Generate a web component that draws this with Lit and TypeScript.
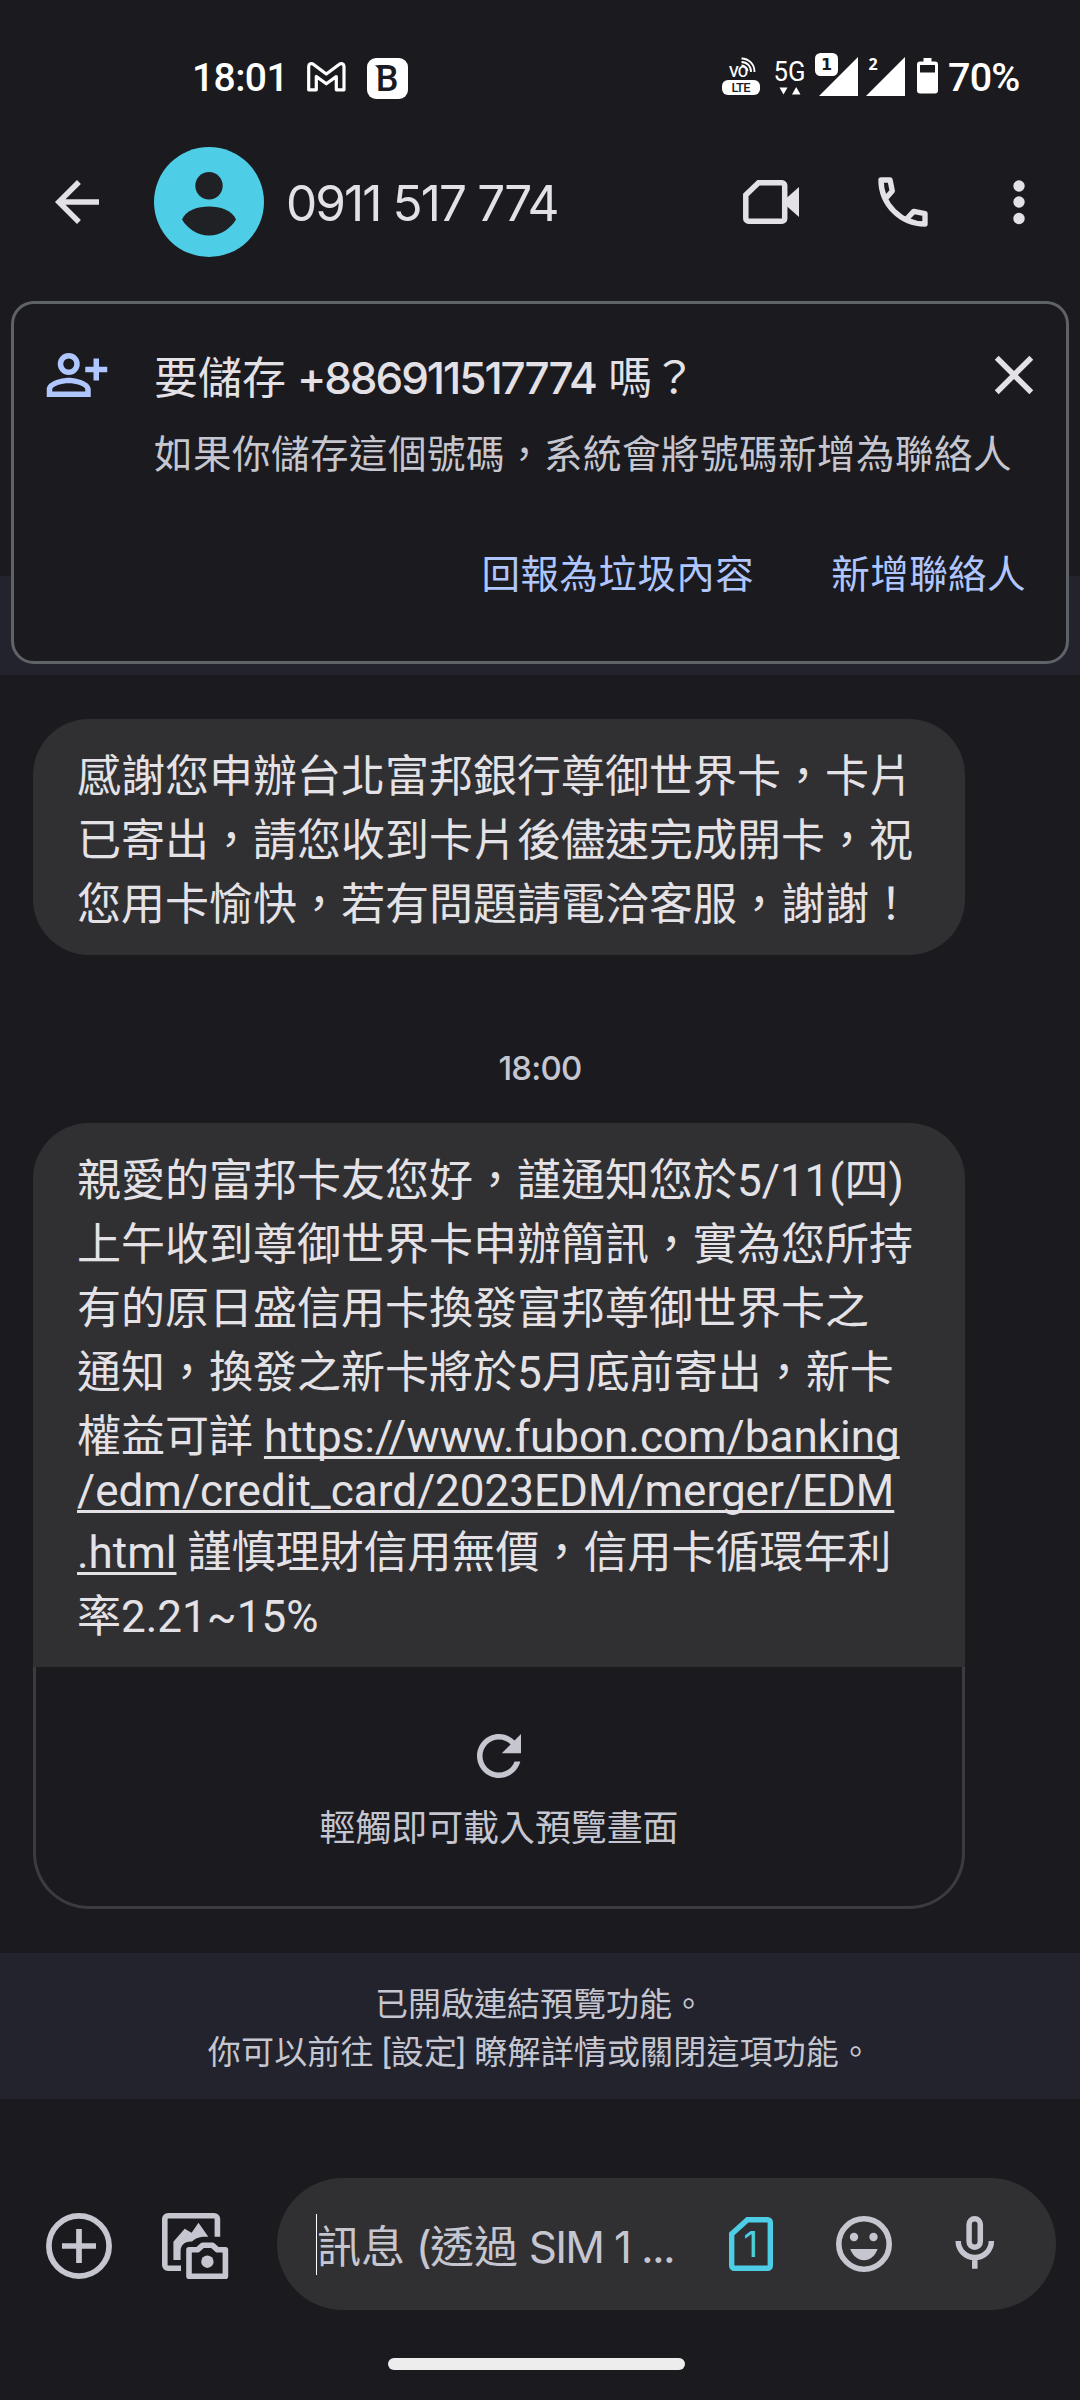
import { LitElement, html, css } from "lit";
import { customElement } from "lit/decorators.js";

const PHONE = "0911 517 774";

@customElement("status-bar")
class StatusBar extends LitElement {
  static styles = css`
    :host { display: flex; align-items: center; height: 84px; padding: 36px 57px 0 192px; color: #fff; font-family: Roboto, sans-serif; font-weight: 500; }
    svg { display: block; flex: none; overflow: visible; }
    .time { width: 115px; font-size: 39px; line-height: 46px; letter-spacing: -0.6px; }
    .mail { margin: -2px 21px 0 0; }
    .grow { flex: 1; }
    .volte { margin: -4px 15px 0 0; }
    .net { margin: -3px 10px 0 0; }
    .sig { margin: -7px 8px 0 0; }
    .sig2 { margin: -7px 12px 0 0; }
    .battery { margin: -4px 10px 0 0; }
    .pct { width: 75px; font-size: 39.500px; line-height: 46px; letter-spacing: -0.8px; white-space: nowrap; }
    .vo { font: 500 15px Roboto, sans-serif; fill: #fff; }
    .lte { font: 500 13px Roboto, sans-serif; fill: #1b1b1f; }
    .g5 { font: 400 27px Roboto, sans-serif; fill: #fff; }
    .badge { font: 700 16px "DejaVu Sans", sans-serif; fill: #1b1b1f; }
    .two { font: 700 16px "Noto Sans", sans-serif; fill: #fff; }
    .b { font: 500 36px Roboto, sans-serif; fill: #1b1b1f; }
  `;
  render() {
    return html`
      <span class="time">18:01</span>
      <svg class="mail" width="39" height="30" viewBox="0 0 39 30" fill="none" stroke="#fff" stroke-width="3.200" stroke-linejoin="round">
        <path d="M1.7 4.5c0-2.8 2.8-3.6 4.6-2.2L19.3 12 32.4 2.3c1.8-1.4 4.6-.6 4.6 2.2v23.3h-7.7V14.5l-10 7.3-10-7.3v13.3H1.7z"/>
      </svg>
      <svg width="41" height="41" viewBox="0 0 41 41">
        <rect width="41" height="41" rx="9" fill="#fff"/>
        <text class="b" x="8.800" y="33">B</text>
        <path d="M8 7.300h7v4h-3z" fill="#1b1b1f"/>
      </svg>
      <span class="grow"></span>
      <svg class="volte" width="38" height="40" viewBox="0 0 38 40">
        <text class="vo" x="7" y="21" textLength="19">VO</text>
        <g fill="none" stroke="#fff" stroke-width="1.800">
          <path d="M19.500 2.500A13 13 0 0 1 32.500 16"/><path d="M19.500 6A9.500 9.500 0 0 1 29 16"/><path d="M19.500 9.500A6 6 0 0 1 25.500 15"/>
        </g>
        <rect y="24" width="38" height="15" rx="6" fill="#fff"/>
        <text class="lte" x="9.500" y="36" textLength="19">LTE</text>
      </svg>
      <svg class="net" width="30" height="40" viewBox="0 0 30 40">
        <text class="g5" x="-1.500" y="24.300" textLength="32" lengthAdjust="spacingAndGlyphs">5G</text>
        <path d="M4.500 30.500h8l-4 7zM17 37.500h8.500l-4.300-7.500z" fill="#fff"/>
      </svg>
      <svg class="sig" width="43" height="43" viewBox="0 0 43 43">
        <path d="M43 4v39H4z" fill="#fff"/>
        <rect width="23" height="23" rx="5.500" fill="#fff"/>
        <text class="badge" x="6" y="17.200">1</text>
      </svg>
      <svg class="sig2" width="39" height="43" viewBox="0 0 39 43">
        <path d="M39 4v39H0z" fill="#fff"/>
        <text class="two" x="2.500" y="17">2</text>
      </svg>
      <svg class="battery" width="21" height="36" viewBox="0 0 21 36">
        <path fill="#fff" fill-rule="evenodd" d="M6.500 0h8v3.500H18a3 3 0 0 1 3 3V32.500a3 3 0 0 1-3 3H3a3 3 0 0 1-3-3V6.500a3 3 0 0 1 3-3h3.500zM3 7v7.500h15V7z"/>
      </svg>
      <span class="pct">70%</span>
    `;
  }
}

@customElement("chat-header")
class ChatHeader extends LitElement {
  static styles = css`
    :host { display: flex; align-items: center; box-sizing: border-box; height: 164px; padding: 0 28px 0 44px; color: #e4e1e6; }
    svg { display: block; flex: none; }
    .avatar { margin: 0 22px 0 44px; }
    .name { flex: 1; font: 400 49.500px/60px Inter, sans-serif; letter-spacing: -1.900px; white-space: nowrap; padding-top: 1px; }
    .video { margin-right: 71px; }
    .call { margin-right: 50px; }
  `;
  render() {
    return html`
      <svg width="66" height="66" viewBox="0 0 24 24" fill="currentColor"><path d="M20 11H7.830l5.590-5.590L12 4l-8 8 8 8 1.410-1.410L7.830 13H20z"/></svg>
      <svg class="avatar" width="110" height="110" viewBox="0 0 110 110">
        <circle cx="55" cy="55" r="55" fill="#4ecde6"/>
        <circle cx="55" cy="38.700" r="13.700" fill="#202124"/>
        <path d="M28 72.500C32 63 44 59.500 55 59.500S78 63 82 72.500C77 81 67 88.500 55 88.500S33 81 28 72.500z" fill="#202124"/>
      </svg>
      <span class="name">${PHONE}</span>
      <svg class="video" width="56" height="44" viewBox="0 0 56 44">
        <path d="M15.500 2.800H39a2.700 2.700 0 0 1 2.700 2.700V38.500A2.700 2.700 0 0 1 39 41.200H5.500a2.700 2.700 0 0 1-2.700-2.700V15z" fill="none" stroke="currentColor" stroke-width="5.500"/>
        <path d="M43 18.500L56 7v30L43 25.500z" fill="currentColor"/>
      </svg>
      <svg class="call" width="66" height="66" viewBox="0 0 24 24" fill="none" stroke="currentColor" stroke-width="1.950" stroke-linejoin="round">
        <path d="M5.700 10.700L8.100 8 7.300 4H4A16 16 0 0 0 20 20V16.200L15.900 15.400 13.300 18.200"/>
      </svg>
      <svg width="66" height="66" viewBox="0 0 66 66" fill="currentColor"><circle cx="33" cy="17" r="5.700"/><circle cx="33" cy="33" r="5.700"/><circle cx="33" cy="49.500" r="5.700"/></svg>
    `;
  }
}

@customElement("save-contact-card")
class SaveContactCard extends LitElement {
  static styles = css`
    :host { display: block; box-sizing: border-box; height: 391px; padding: 17px 11px 0; background: linear-gradient(#1b1b1f 292px, #22232d 292px); }
    .card { box-sizing: border-box; height: 363px; border: 3px solid #5f6368; border-radius: 23px; background: #1b1b1f; padding: 38px 19px 0 30px; display: flex; flex-direction: column; }
    .top { display: flex; align-items: flex-start; }
    svg { display: block; flex: none; }
    .add { color: #b0c6ff; margin-right: 44px; }
    .text { flex: 1; white-space: nowrap; padding-top: 3px; }
    .title { color: #e4e1e6; font: 400 44px/66px Inter, "Noto Sans CJK TC", sans-serif; }
    .num { font-weight: 500; letter-spacing: -2.050px; margin-left: -1.500px; }
    .sub { color: #c5c6d0; font: 400 38.500px/60px Roboto, "Noto Sans CJK TC", sans-serif; letter-spacing: 0.500px; margin-top: 14px; width: 800px; }
    .close { color: #e4e1e6; }
    .actions { display: flex; justify-content: flex-end; gap: 77px; margin-top: 60px; padding-right: 21px; color: #b0c6ff; font: 400 38.500px/60px Roboto, "Noto Sans CJK TC", sans-serif; letter-spacing: 0.450px; }
  `;
  render() {
    return html`
      <div class="card">
        <div class="top">
          <svg class="add" width="66" height="66" viewBox="0 0 24 24" fill="currentColor">
            <circle cx="9" cy="8" r="3" fill="none" stroke="currentColor" stroke-width="2"/>
            <path fill-rule="evenodd" d="M1 20v-2.800C1 14.500 6 13 9 13s8 1.500 8 4.200V20zM3 18h12v-.8C15 16 11.500 15 9 15s-6 1-6 2.200z"/>
            <path d="M18 6h2v3h3v2h-3v3h-2v-3h-3V9h3z"/>
          </svg>
          <div class="text">
            <div class="title">要儲存 <span class="num">+886911517774</span> 嗎？</div>
            <div class="sub">如果你儲存這個號碼，系統會將號碼新增為聯絡人</div>
          </div>
          <svg class="close" width="66" height="66" viewBox="0 0 24 24" fill="currentColor"><path d="M19 6.410L17.590 5 12 10.590 6.410 5 5 6.410 10.590 12 5 17.590 6.410 19 12 13.410 17.590 19 19 17.590 13.410 12z"/></svg>
        </div>
        <div class="actions"><span>回報為垃圾內容</span><span>新增聯絡人</span></div>
      </div>
    `;
  }
}

@customElement("message-list")
class MessageList extends LitElement {
  static styles = css`
    :host { display: flex; flex-direction: column; height: 1278px; box-sizing: border-box; padding: 44px 115px 0 33px; }
    .bubble { box-sizing: border-box; background: #303032; color: #e4e2e6; border-radius: 56px; padding: 26px 40px 18px 44px; font: 400 44px/64px Roboto, "Noto Sans CJK TC", sans-serif; white-space: nowrap; }
    .joined { border-radius: 56px 56px 0 0; }
    .latin { line-height: 44px; padding-bottom: 8px; }
    .link { text-decoration: underline; text-decoration-thickness: 2.500px; text-underline-offset: 4px; text-decoration-skip-ink: none; }
    .time { margin: 92px -82px 33px 0; text-align: center; color: #c5c6d0; font: 500 33px/43px Inter, sans-serif; letter-spacing: -0.800px; }
    .preview { box-sizing: border-box; height: 242px; border: 3px solid #3b3b40; border-top: 0; border-radius: 0 0 56px 56px; display: flex; flex-direction: column; align-items: center; padding-top: 56px; color: #c5c6d0; font: 400 35.900px/50px Roboto, "Noto Sans CJK TC", sans-serif; }
    .label { margin-top: 15px; }
    svg { display: block; }
  `;
  render() {
    return html`
      <div class="bubble">
        <div>感謝您申辦台北富邦銀行尊御世界卡，卡片</div>
        <div>已寄出，請您收到卡片後儘速完成開卡，祝</div>
        <div>您用卡愉快，若有問題請電洽客服，謝謝！</div>
      </div>
      <div class="time">18:00</div>
      <div class="bubble joined">
        <div>親愛的富邦卡友您好，謹通知您於5/11(四)</div>
        <div>上午收到尊御世界卡申辦簡訊，實為您所持</div>
        <div>有的原日盛信用卡換發富邦尊御世界卡之</div>
        <div>通知，換發之新卡將於5月底前寄出，新卡</div>
        <div>權益可詳 <span class="link">https://www.fubon.com/banking</span></div>
        <div class="latin"><span class="link">/edm/credit_card/2023EDM/merger/EDM</span></div>
        <div><span class="link">.html</span> 謹慎理財信用無價，信用卡循環年利</div>
        <div>率2.21~15%</div>
      </div>
      <div class="preview">
        <svg width="66" height="66" viewBox="0 0 24 24" fill="currentColor"><path d="M17.650 6.350C16.200 4.900 14.210 4 12 4c-4.420 0-7.990 3.580-7.990 8s3.570 8 7.990 8c3.730 0 6.840-2.550 7.730-6h-2.080c-.82 2.330-3.040 4-5.650 4-3.310 0-6-2.690-6-6s2.690-6 6-6c1.660 0 3.140.69 4.220 1.780L13 11h7V4z"/></svg>
        <div class="label">輕觸即可載入預覽畫面</div>
      </div>
    `;
  }
}

@customElement("compose-bar")
class ComposeBar extends LitElement {
  static styles = css`
    :host { display: flex; align-items: center; height: 132px; padding: 0 24px 0 46px; color: #c5c6d0; }
    svg { display: block; flex: none; overflow: visible; }
    .plus { margin: 4px 50px 0 0; }
    .gallery { margin: 4px 49px 0 0; }
    .pill { flex: 1; height: 132px; border-radius: 66px; background: #303032; display: flex; align-items: center; box-sizing: border-box; padding: 0 61px 0 39px; }
    .cursor { width: 1px; height: 61px; background: #fff; }
    .hint { width: 412px; padding-top: 5px; font: 400 44px/64px Inter, "Noto Sans CJK TC", sans-serif; white-space: nowrap; }
    .latin { letter-spacing: -1.700px; }
    .sim { margin-right: 63px; }
    .one { font: 400 36px Inter, sans-serif; fill: #4ecde6; }
    .smile { margin-right: 63px; }
  `;
  render() {
    return html`
      <svg class="plus" width="66" height="66" viewBox="0 0 66 66" fill="none" stroke="currentColor" stroke-width="5.700"><circle cx="33" cy="33" r="30.100"/><path d="M33 16v34M16 33h34"/></svg>
      <svg class="gallery" width="66" height="66" viewBox="0 0 66 66" fill="none" stroke="currentColor" stroke-width="5.600">
        <path d="M55.400 23.700V6a3.200 3.200 0 0 0-3.200-3.200H6A3.200 3.200 0 0 0 2.800 6V52A3.200 3.200 0 0 0 6 55.200H19"/>
        <path stroke="none" fill="currentColor" d="M11.400 47V28.700L22.700 15.700 29.600 19.700 36.500 9.700 46.300 23.700C40 23.700 35.500 23.500 30 28.500 23 28 18.600 32 18.600 38V47z"/>
        <path stroke-linejoin="round" d="M27 36.800H35.500L40.500 32.300H50.500L55.500 36.800H63.400V63.200H27z"/>
        <circle cx="45.400" cy="48.700" r="6.200" fill="currentColor" stroke="none"/>
      </svg>
      <div class="pill">
        <span class="cursor"></span>
        <span class="hint">訊息<span class="latin"> (</span>透過<span class="latin"> SIM 1 ...</span></span>
        <svg class="sim" width="44" height="54" viewBox="0 0 44 54">
          <path d="M18.500 2.700H38.700A2.600 2.600 0 0 1 41.300 5.300V48.700A2.600 2.600 0 0 1 38.700 51.300H5.300A2.600 2.600 0 0 1 2.700 48.700V17z" fill="none" stroke="#4ecde6" stroke-width="5.400"/>
          <text class="one" x="14.500" y="40">1</text>
        </svg>
        <svg class="smile" width="56" height="56" viewBox="0 0 56 56">
          <circle cx="28" cy="28" r="25.200" fill="none" stroke="currentColor" stroke-width="5.600"/>
          <g fill="currentColor"><circle cx="18" cy="21" r="4.200"/><circle cx="37.500" cy="21" r="4.200"/><path d="M14.200 33H41.600C39 40 34 44.300 28 44.300S16.800 40 14.200 33z"/></g>
        </svg>
        <svg class="mic" width="39" height="53" viewBox="0 0 39 53" fill="none" stroke="currentColor" stroke-width="5.500">
          <g transform="translate(0.500 -2)"><rect x="13.600" y="2.700" width="11.200" height="28.500" rx="5.600"/><path d="M2.700 25a16.600 16.600 0 0 0 33.200 0M19.300 41V52.700"/></g>
        </svg>
      </div>
    `;
  }
}

@customElement("app-root")
class AppRoot extends LitElement {
  static styles = css`
    :host { display: flex; flex-direction: column; width: 1080px; height: 2400px; overflow: hidden; background: #1b1b1f; }
    .notice { height: 146px; box-sizing: border-box; padding-top: 28px; background: #22232d; color: #c5c6d0; text-align: center; font: 400 33px/48px Roboto, "Noto Sans CJK TC", sans-serif; }
    .wide { letter-spacing: 0.150px; }
    .compose { padding-top: 79px; }
    .nav { width: 297px; height: 12px; border-radius: 6px; background: #ededed; margin: 48px 0 0 388px; }
  `;
  render() {
    return html`
      <status-bar></status-bar>
      <chat-header></chat-header>
      <save-contact-card></save-contact-card>
      <message-list></message-list>
      <div class="notice">
        <div>已開啟連結預覽功能。</div>
        <div class="wide">你可以前往 [設定] 瞭解詳情或關閉這項功能。</div>
      </div>
      <div class="compose"><compose-bar></compose-bar></div>
      <div class="nav"></div>
    `;
  }
}
